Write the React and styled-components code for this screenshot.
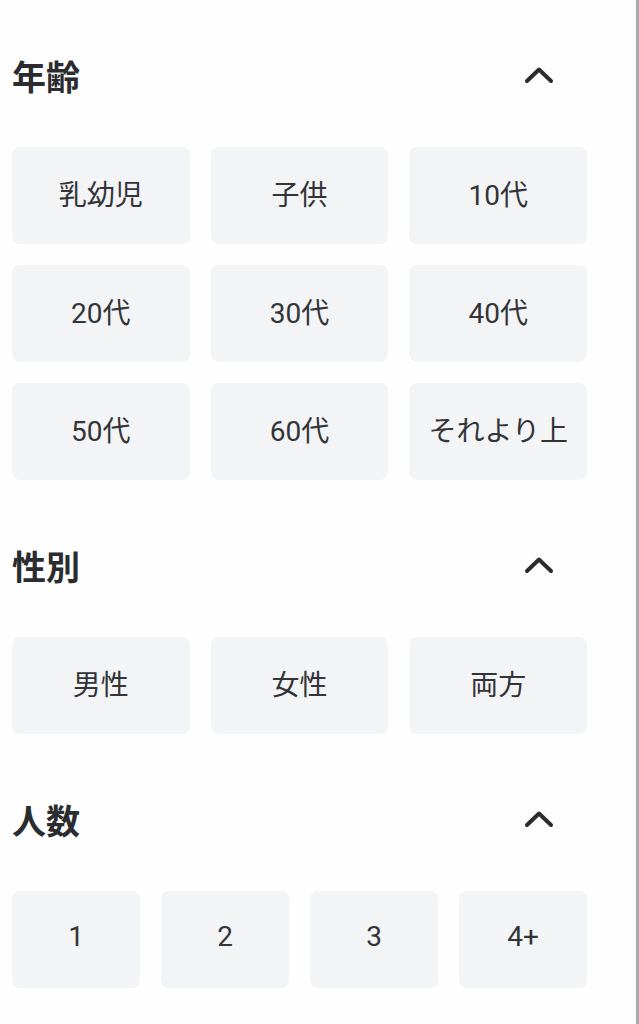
import React from 'react';
import styled, { createGlobalStyle } from 'styled-components';

const GlobalStyle = createGlobalStyle`
  html, body {
    margin: 0;
    padding: 0;
    background: #ffffff;
  }
  body {
    font-family: Roboto, "Noto Sans CJK JP", sans-serif;
  }
`

const Screen = styled.div`
  width: 639px;
  min-height: 1024px;
  box-sizing: border-box;
  border-right: 3px solid #a9a9a9;
  background: #fefefe;
  padding: 43px 0 0 12px;
`

const Panel = styled.div`
  width: 575px;
  display: flex;
  flex-direction: column;
  gap: 53px;
`

const Section = styled.section`
  display: flex;
  flex-direction: column;
  gap: 40px;
`

const Header = styled.div`
  height: 64px;
  display: flex;
  align-items: center;
  justify-content: space-between;
`

const Title = styled.h2`
  margin: 0;
  font-family: "Noto Sans CJK JP", sans-serif;
  font-size: 34px;
  font-weight: 700;
  color: #2b2c30;
`

const Toggle = styled.button`
  width: 40px;
  height: 40px;
  margin-right: 28px;
  padding: 0;
  border: none;
  background: none;
  display: flex;
  align-items: center;
  justify-content: center;
`

const Grid = styled.div`
  display: grid;
  grid-template-columns: repeat(${p => p.$cols}, 1fr);
  column-gap: ${p => p.$gap}px;
  row-gap: 21px;
`

const Chip = styled.button`
  height: 97px;
  border: none;
  border-radius: 8px;
  background: #f3f4f6;
  color: #333438;
  font-family: Roboto, "Noto Sans CJK JP", sans-serif;
  font-size: 28px;
  font-weight: 400;
  padding: 0 0 6px;
  display: flex;
  align-items: center;
  justify-content: center;
`

const Chevron = () => (
  <svg width="30" height="18" viewBox="0 0 30 18" fill="none">
    <path d="M3 15 L15 3.5 L27 15" stroke="#2b2c30" strokeWidth="4" strokeLinecap="round" strokeLinejoin="round" />
  </svg>
)

const sections = [
  {
    title: '年齢',
    cols: 3,
    gap: 21,
    items: ['乳幼児', '子供', '10代', '20代', '30代', '40代', '50代', '60代', 'それより上'],
  },
  {
    title: '性別',
    cols: 3,
    gap: 21,
    items: ['男性', '女性', '両方'],
  },
  {
    title: '人数',
    cols: 4,
    gap: 21,
    items: ['1', '2', '3', '4+'],
  },
]

export default function App() {
  return (
    <>
      <GlobalStyle />
      <Screen>
        <Panel>
          {sections.map(s => (
            <Section key={s.title}>
              <Header>
                <Title>{s.title}</Title>
                <Toggle aria-label="collapse"><Chevron /></Toggle>
              </Header>
              <Grid $cols={s.cols} $gap={s.gap}>
                {s.items.map(item => (
                  <Chip key={item}>{item}</Chip>
                ))}
              </Grid>
            </Section>
          ))}
        </Panel>
      </Screen>
    </>
  )
}
